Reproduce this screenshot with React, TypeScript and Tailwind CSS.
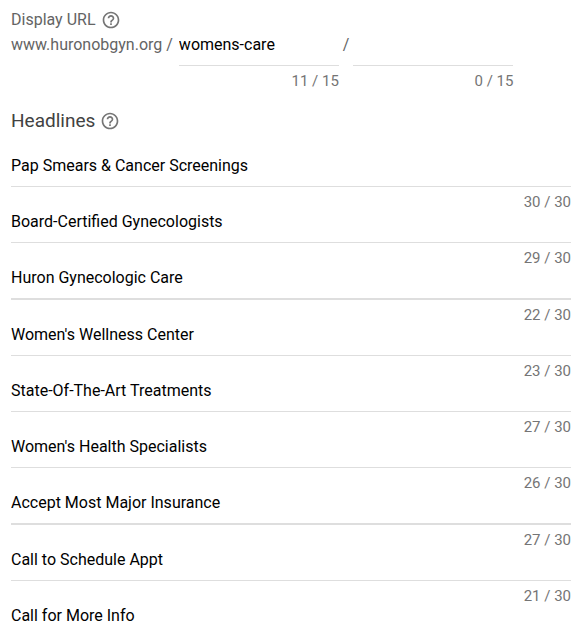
type Headline = {
  text: string;
  count?: number;
  strong?: boolean;
};

const headlines: Headline[] = [
  { text: 'Pap Smears & Cancer Screenings', count: 30 },
  { text: 'Board-Certified Gynecologists', count: 29 },
  { text: 'Huron Gynecologic Care', count: 22, strong: true },
  { text: "Women's Wellness Center", count: 23 },
  { text: 'State-Of-The-Art Treatments', count: 27 },
  { text: "Women's Health Specialists", count: 26 },
  { text: 'Accept Most Major Insurance', count: 27, strong: true },
  { text: 'Call to Schedule Appt', count: 21 },
  { text: 'Call for More Info' },
];

function HelpButton({ label }: { label: string }) {
  return (
    <button type="button" aria-label={label} className="text-[#757575]">
      <svg viewBox="0 0 24 24" className="size-5" fill="currentColor" aria-hidden="true">
        <path d="M11 18h2v-2h-2v2zm1-16C6.48 2 2 6.48 2 12s4.48 10 10 10 10-4.48 10-10S17.52 2 12 2zm0 18c-4.41 0-8-3.59-8-8s3.59-8 8-8 8 3.59 8 8-3.59 8-8 8zm0-14c-2.21 0-4 1.79-4 4h2c0-1.1.9-2 2-2s2 .9 2 2c0 2-3 1.75-3 5h2c0-2.25 3-2.5 3-5 0-2.21-1.79-4-4-4z" />
      </svg>
    </button>
  );
}

function PathField({ label, value, count }: { label: string; value: string; count: number }) {
  return (
    <div className="w-40">
      <input
        type="text"
        aria-label={label}
        defaultValue={value}
        className="block h-[34px] w-full border-b border-[#dedede] pb-2 text-black outline-none"
      />
      <div className="pt-2 text-right text-[15px] leading-[14px] text-[#757575]">{count} / 15</div>
    </div>
  );
}

function HeadlineField({ headline, index }: { headline: Headline; index: number }) {
  const hasCount = headline.count !== undefined;

  return (
    <div>
      <input
        type="text"
        aria-label={`Headline ${index + 1}`}
        defaultValue={headline.text}
        className={`block w-full border-[#dedede] pb-2 text-black outline-none ${
          headline.strong ? 'h-[35px] border-b-2' : hasCount ? 'h-[34px] border-b' : 'h-[33px]'
        }`}
      />
      {hasCount && (
        <div className="pt-2 text-right text-[15px] leading-[14px] text-[#757575]">
          {headline.count} / 30
        </div>
      )}
    </div>
  );
}

export default function App() {
  return (
    <main className="min-h-screen bg-white pr-3 pl-[11px] pt-2 font-['Roboto',sans-serif] text-base text-[#646464]">
      <section>
        <div className="flex h-6 items-center gap-[5px]">
          <h3>Display URL</h3>
          <HelpButton label="About display URL" />
        </div>
        <div className="flex">
          <span className="pr-1.5 leading-[26px]">www.huronobgyn.org /</span>
          <PathField label="Path 1" value="womens-care" count={11} />
          <span className="px-1 leading-[26px]">/</span>
          <PathField label="Path 2" value="" count={0} />
        </div>
      </section>

      <section className="mt-[17px]">
        <div className="flex h-8 items-center gap-[5px]">
          <h2 className="text-[19px] text-[#424242]">Headlines</h2>
          <HelpButton label="About headlines" />
        </div>
        <div className="mt-4">
          {headlines.map((headline, index) => (
            <HeadlineField key={headline.text} headline={headline} index={index} />
          ))}
        </div>
      </section>
    </main>
  );
}
